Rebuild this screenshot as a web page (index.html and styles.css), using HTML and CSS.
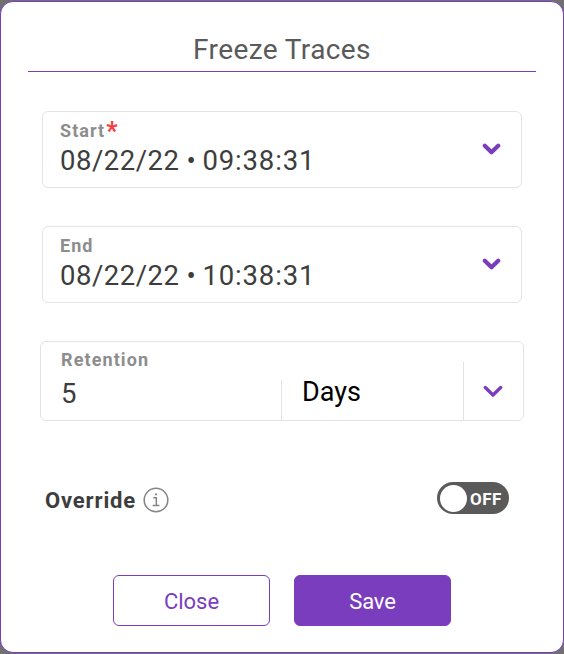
FILE: index.html
```html
<!DOCTYPE html>
<html lang="en">
<head>
<meta charset="utf-8">
<title>Freeze Traces</title>
<link rel="stylesheet" href="styles.css">
</head>
<body>
<main class="dialog">
  <h1 class="title"><span>Freeze Traces</span></h1>
  <section class="field">
    <div class="copy">
      <div class="label"><span>Start</span><span class="required">*</span></div>
      <div class="value"><span class="date">08/22/22</span><span class="dot">•</span><span class="time">09:38:31</span></div>
    </div>
    <svg class="chevron" width="20" height="14" viewBox="0 0 20 14"><path d="M2.8 2.8 L9.5 9.3 L16.2 2.8"/></svg>
  </section>
  <section class="field">
    <div class="copy">
      <div class="label"><span>End</span></div>
      <div class="value"><span class="date">08/22/22</span><span class="dot">•</span><span class="time">10:38:31</span></div>
    </div>
    <svg class="chevron" width="20" height="14" viewBox="0 0 20 14"><path d="M2.8 2.8 L9.5 9.3 L16.2 2.8"/></svg>
  </section>
  <section class="retention">
    <div class="amount">
      <div class="label"><span>Retention</span></div>
      <div class="value">5</div>
    </div>
    <div class="unit"><span>Days</span></div>
    <div class="menu"><svg class="chevron" width="20" height="14" viewBox="0 0 20 14"><path d="M2.3 3.6 L10 10.9 L17.7 3.6"/></svg></div>
  </section>
  <section class="override">
    <span class="override-label">Override</span>
    <svg class="info" width="26" height="26" viewBox="0 0 26 26"><circle cx="13" cy="13" r="11.8"/><path d="M10.2 10.8 H13.3 V18.5 M9.6 18.5 H16.4"/><circle class="tittle" cx="13" cy="7.3" r="1.1"/></svg>
    <div class="toggle"><span class="knob"></span><span class="state">OFF</span></div>
  </section>
  <footer class="actions">
    <button class="button close"><span>Close</span></button>
    <button class="button save"><span>Save</span></button>
  </footer>
</main>
</body>
</html>
```
FILE: styles.css
```css
* { box-sizing: border-box; }
body {
  margin: 0;
  padding: 1px 0;
  height: 654px;
  background: #707070;
  font-family: Roboto, "Liberation Sans", sans-serif;
  overflow: hidden;
}
.dialog {
  height: 652px;
  border: 1px solid #793dbe;
  border-radius: 13px;
  background: #fff;
  padding: 27px 27px 0;
}
.title {
  height: 43px;
  margin: 0 0 39px;
  border-bottom: 1px solid #793dbe;
  font-size: 28px;
  font-weight: 400;
  line-height: 41px;
  letter-spacing: .4px;
  text-align: center;
  color: #5a5a5a;
}
.field {
  display: flex;
  justify-content: space-between;
  height: 77px;
  margin: 0 14px 38px;
  padding: 7px 19px 0 17px;
  border: 1px solid #e3e3e3;
  border-radius: 6px;
}
.label {
  display: flex;
  height: 24px;
  font-size: 18px;
  font-weight: 700;
  line-height: 24px;
  letter-spacing: 1.05px;
  color: #8d8d8d;
}
.required { color: #fa3c3c; font-size: 25px; line-height: 26px; letter-spacing: 0; margin-left: 1px; }
.value {
  display: flex;
  height: 36px;
  font-size: 27.5px;
  line-height: 36px;
  letter-spacing: .5px;
  color: #3d3d3d;
}
.dot { width: 24px; text-align: center; }
.time { letter-spacing: .85px; margin-left: -1px; }
.chevron {
  margin-top: 24px;
  fill: none;
  stroke: #793dbe;
  stroke-width: 4.2;
  stroke-linecap: round;
  stroke-linejoin: round;
}
.retention {
  display: flex;
  align-items: flex-end;
  height: 80px;
  margin: 0 12px;
  border: 1px solid #e3e3e3;
  border-radius: 6px;
}
.amount { width: 240px; height: 78px; padding: 6px 0 0 20px; }
.amount .value { margin-top: 4px; }
.amount .label { letter-spacing: 1.1px; }
.unit {
  width: 182px;
  height: 40px;
  padding-left: 20px;
  border-left: 1px solid #e3e3e3;
  font-size: 27px;
  line-height: 24px;
  letter-spacing: 0;
  color: #000;
}
.menu { width: 60px; height: 58px; padding-left: 19px; border-left: 1px solid #e3e3e3; }
.menu .chevron { margin-top: 22px; stroke-width: 3.4; }
.override {
  display: flex;
  align-items: center;
  height: 34px;
  margin: 60px 27px 0 17px;
}
.override-label {
  width: 98px;
  padding-top: 4px;
  font-size: 22px;
  font-weight: 700;
  letter-spacing: .85px;
  color: #3d3d3d;
}
.info {
  margin-top: 3px;
  fill: none;
  stroke: #858585;
  stroke-width: 1.5;
}
.info .tittle { fill: #858585; stroke: none; }
.toggle {
  display: flex;
  align-items: center;
  width: 72px;
  height: 32px;
  margin-left: auto;
  padding-left: 3px;
  border-radius: 16px;
  background: #5a5a5a;
}
.knob { width: 27px; height: 27px; border-radius: 50%; background: #fff; }
.state { margin: 2px 0 0 3px; font-size: 17px; font-weight: 700; color: #fff; letter-spacing: .5px; }
.actions { display: flex; gap: 24px; margin: 60px 0 0 85px; }
.button {
  width: 157px;
  height: 51px;
  padding: 2px 0 0;
  border: 1px solid #793dbe;
  border-radius: 6px;
  background: #fff;
  color: #793dbe;
  font: 400 22px Roboto, "Liberation Sans", sans-serif;
}
.save { background: #793dbe; color: #fff; }
.save span { letter-spacing: -.1px; }
```
